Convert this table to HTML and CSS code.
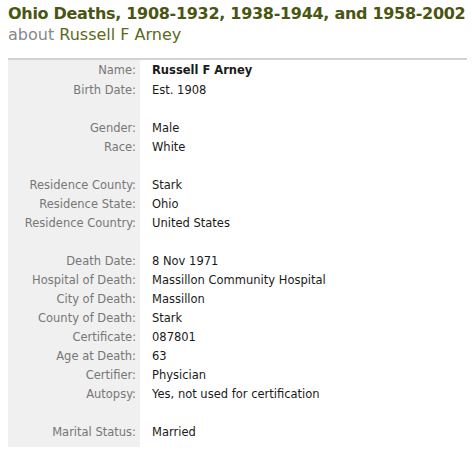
FILE: index.html
```html
<!DOCTYPE html>
<html>
<head>
<meta charset="utf-8">
<link rel="stylesheet" href="styles.css">
</head>
<body>
<h1 class="title">Ohio Deaths, 1908-1932, 1938-1944, and 1958-2002</h1>
<div class="sub"><span class="about">about</span> <span class="who">Russell F Arney</span></div>
<table class="rec">
<tr class="first"><td class="lab">Name:</td><td class="val"><b>Russell F Arney</b></td></tr>
<tr><td class="lab">Birth Date:</td><td class="val">Est. 1908</td></tr>
<tr class="gap"><td class="lab"></td><td class="val"></td></tr>
<tr><td class="lab">Gender:</td><td class="val">Male</td></tr>
<tr><td class="lab">Race:</td><td class="val">White</td></tr>
<tr class="gap"><td class="lab"></td><td class="val"></td></tr>
<tr><td class="lab">Residence County:</td><td class="val">Stark</td></tr>
<tr><td class="lab">Residence State:</td><td class="val">Ohio</td></tr>
<tr><td class="lab">Residence Country:</td><td class="val">United States</td></tr>
<tr class="gap"><td class="lab"></td><td class="val"></td></tr>
<tr><td class="lab">Death Date:</td><td class="val">8 Nov 1971</td></tr>
<tr><td class="lab">Hospital of Death:</td><td class="val">Massillon Community Hospital</td></tr>
<tr><td class="lab">City of Death:</td><td class="val">Massillon</td></tr>
<tr><td class="lab">County of Death:</td><td class="val">Stark</td></tr>
<tr><td class="lab">Certificate:</td><td class="val">087801</td></tr>
<tr><td class="lab">Age at Death:</td><td class="val">63</td></tr>
<tr><td class="lab">Certifier:</td><td class="val">Physician</td></tr>
<tr><td class="lab">Autopsy:</td><td class="val">Yes, not used for certification</td></tr>
<tr class="gap"><td class="lab"></td><td class="val"></td></tr>
<tr><td class="lab">Marital Status:</td><td class="val">Married</td></tr>
<tr class="end"><td class="lab"></td><td class="val"></td></tr>
</table>
</body>
</html>
```
FILE: styles.css
```css
html, body { margin: 0; padding: 0; background: #fff; }
body { padding: 0 8px; font-family: "DejaVu Sans", Verdana, sans-serif; }
.title {
  margin: 0;
  padding-top: 3px;
  font-size: 16px;
  line-height: 21px;
  font-weight: bold;
  color: #4b5512;
  white-space: nowrap;
  letter-spacing: -0.3px;
}
.sub {
  font-size: 16px;
  line-height: 22px;
  color: #5c6a1c;
}
.about { color: #888; }
.rec {
  margin-top: 12px;
  width: 459px;
  border-collapse: collapse;
  border-top: 2px solid #d3d3d3;
  font-size: 11.5px;
}
.rec td { padding: 0; height: 19px; vertical-align: middle; white-space: nowrap; }
.lab {
  width: 128px;
  background: #f0f0f0;
  color: #777;
  text-align: right;
  padding-right: 4px !important;
}
.val { color: #1a1a1a; padding-left: 12px !important; }
.rec tr.first td { height: 20px; }
.rec tr.end td { height: 6px; }
```
